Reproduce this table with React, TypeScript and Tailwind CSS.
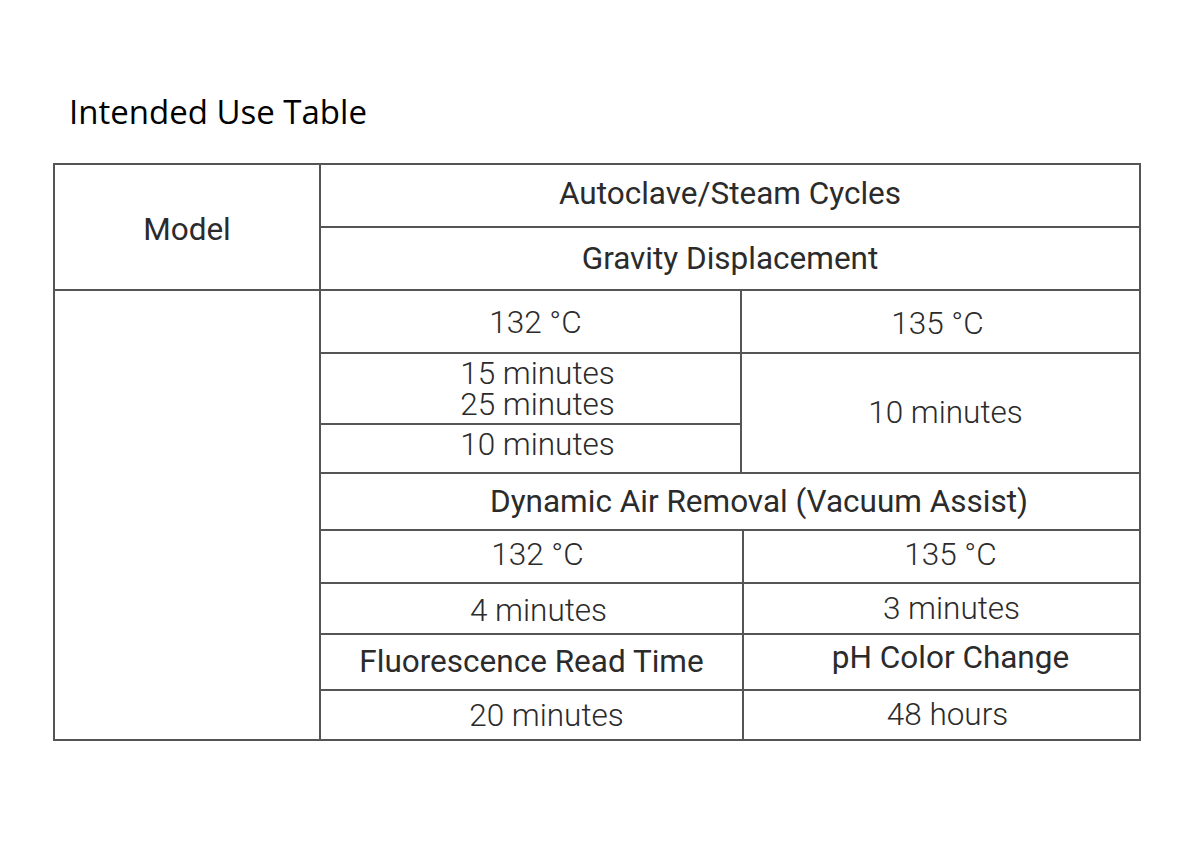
import React from "react";

const roboto = { fontFamily: "Roboto, 'Liberation Sans', sans-serif" };

function Cell({ children, light = false, className = "" }: { children: React.ReactNode; light?: boolean; className?: string }) {
  return (
    <div
      className={`bg-white flex items-center justify-center text-center text-[31.5px] text-[#2b2b2b] ${light ? "font-light" : "font-normal"} ${className}`}
      style={roboto}
    >
      <span>{children}</span>
    </div>
  );
}

export default function App() {
  return (
    <div className="w-[1200px] h-[850px] bg-white flex flex-col pl-[53px]">
      <div
        className="mt-[95px] ml-[16px] h-[33px] leading-none text-[33px] text-black"
        style={{ fontFamily: "'Open Sans', 'Noto Sans', sans-serif" }}
      >
        Intended Use Table
      </div>
      <div className="mt-[35px] w-[1088px] grid grid-cols-[264px_1fr] grid-rows-[124px_448px] gap-[2px] bg-[#555] p-[2px]">
        <Cell className="pt-[6px]">Model</Cell>
        <div className="grid grid-rows-[61px_61px] gap-[2px]">
          <Cell className="pb-[4px]">Autoclave/Steam Cycles</Cell>
          <Cell>Gravity Displacement</Cell>
        </div>
        <div className="bg-white" />
        <div className="flex flex-col gap-[2px]">
          <div className="grid grid-cols-[419px_1fr] grid-rows-[61px_69px_47px] gap-[2px]">
            <Cell light className="pl-[10px] pt-[3px]">132 °C</Cell>
            <Cell light className="pr-[6px] pt-[4px]">135 °C</Cell>
            <Cell light className="leading-[31px] pl-[14px]">
              15 minutes
              <br />
              25 minutes
            </Cell>
            <Cell light className="row-span-2 pl-[10px]">10 minutes</Cell>
            <Cell light className="pl-[14px] pb-[8px]">10 minutes</Cell>
          </div>
          <Cell className="h-[55px] pl-[58px]">Dynamic Air Removal (Vacuum Assist)</Cell>
          <div className="grid grid-cols-[421px_1fr] grid-rows-[51px_49px_54px_48px] gap-[2px]">
            <Cell light className="pl-[12px] pb-[3px]">132 °C</Cell>
            <Cell light className="pl-[18px] pb-[4px]">135 °C</Cell>
            <Cell light className="pl-[14px] pt-[5px]">4 minutes</Cell>
            <Cell light className="pl-[20px]">3 minutes</Cell>
            <Cell>Fluorescence Read Time</Cell>
            <Cell className="pl-[18px] pb-[9px]">pH Color Change</Cell>
            <Cell light className="pl-[30px] pt-[2px]">20 minutes</Cell>
            <Cell light className="pl-[12px]">48 hours</Cell>
          </div>
        </div>
      </div>
    </div>
  );
}
